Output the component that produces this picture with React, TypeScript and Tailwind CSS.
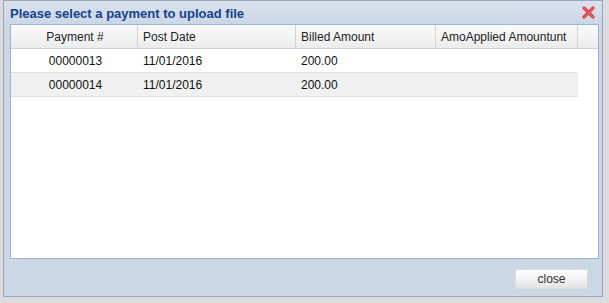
import React from 'react'

const rows = [
  { id: '00000013', date: '11/01/2016', billed: '200.00', applied: '' },
  { id: '00000014', date: '11/01/2016', billed: '200.00', applied: '' },
]

function CloseIcon() {
  return (
    <svg width="13" height="13" viewBox="0 0 13 13">
      <path d="M2 2 L11 11 M11 2 L2 11" stroke="#e0484d" strokeWidth="3.2" strokeLinecap="round" />
      <path d="M2 2 L11 11 M11 2 L2 11" stroke="#f27a7d" strokeWidth="1" strokeLinecap="round" opacity="0.6" />
    </svg>
  )
}

export default function App() {
  return (
    <div className="w-[609px] h-[303px] bg-[#dcdcdc] pl-[3px]" style={{ fontFamily: '"Liberation Sans", Arial, sans-serif' }}>
      <div className="w-[600px] h-[297px] bg-[#ccd7e6] border border-[#98a6ba] flex flex-col">
        {/* title bar */}
        <div className="h-[23px] shrink-0 flex items-center justify-between pl-[6px] pr-[7px] bg-gradient-to-b from-[#d9e1ed] to-[#ccd7e6]">
          <span className="text-[13px] font-bold text-[#15428b] leading-none pt-[1px]">Please select a payment to upload file</span>
          <CloseIcon />
        </div>

        {/* grid panel */}
        <div className="ml-[6px] mr-[3px] h-[235px] shrink-0 bg-white border border-[#99b4dc]">
          <div className="flex h-[24px] text-[12px] text-[#222] bg-gradient-to-b from-[#fafafa] to-[#ececec] border-b border-[#d3d3d3]">
            <div className="w-[127px] flex items-center justify-center pl-[2px] border-r border-[#d3d3d3]">Payment #</div>
            <div className="w-[158px] flex items-center pl-[5px] border-r border-[#d3d3d3]">Post Date</div>
            <div className="w-[140px] flex items-center pl-[5px] border-r border-[#d3d3d3]">Billed Amount</div>
            <div className="w-[142px] flex items-center pl-[5px] border-r border-[#d3d3d3]">AmoApplied Amountunt</div>
            <div className="flex-1" />
          </div>
          {rows.map((r, i) => (
            <div
              key={r.id}
              className={`flex h-[24px] w-[567px] text-[12px] text-[#111] border-b ${i % 2 === 1 ? 'bg-[#f0f0f0] border-[#dcdcdc]' : 'bg-white border-[#e4e4e4]'}`}
            >
              <div className="w-[127px] flex items-center justify-center pl-[2px] pt-[1px]">{r.id}</div>
              <div className="w-[158px] flex items-center pl-[5px] pt-[1px]">{r.date}</div>
              <div className="w-[140px] flex items-center pl-[5px] pt-[1px]">{r.billed}</div>
              <div className="w-[142px] flex items-center pl-[5px] pt-[1px]">{r.applied}</div>
            </div>
          ))}
        </div>

        {/* footer */}
        <div className="flex-1 flex items-start justify-end pr-[14px] pt-[10px]">
          <button className="w-[73px] h-[20px] text-[12px] text-[#333] border border-[#d8dde4] bg-gradient-to-b from-[#ffffff] via-[#f3f3f3] to-[#e2e2e2] leading-none">
            close
          </button>
        </div>
      </div>
    </div>
  )
}
